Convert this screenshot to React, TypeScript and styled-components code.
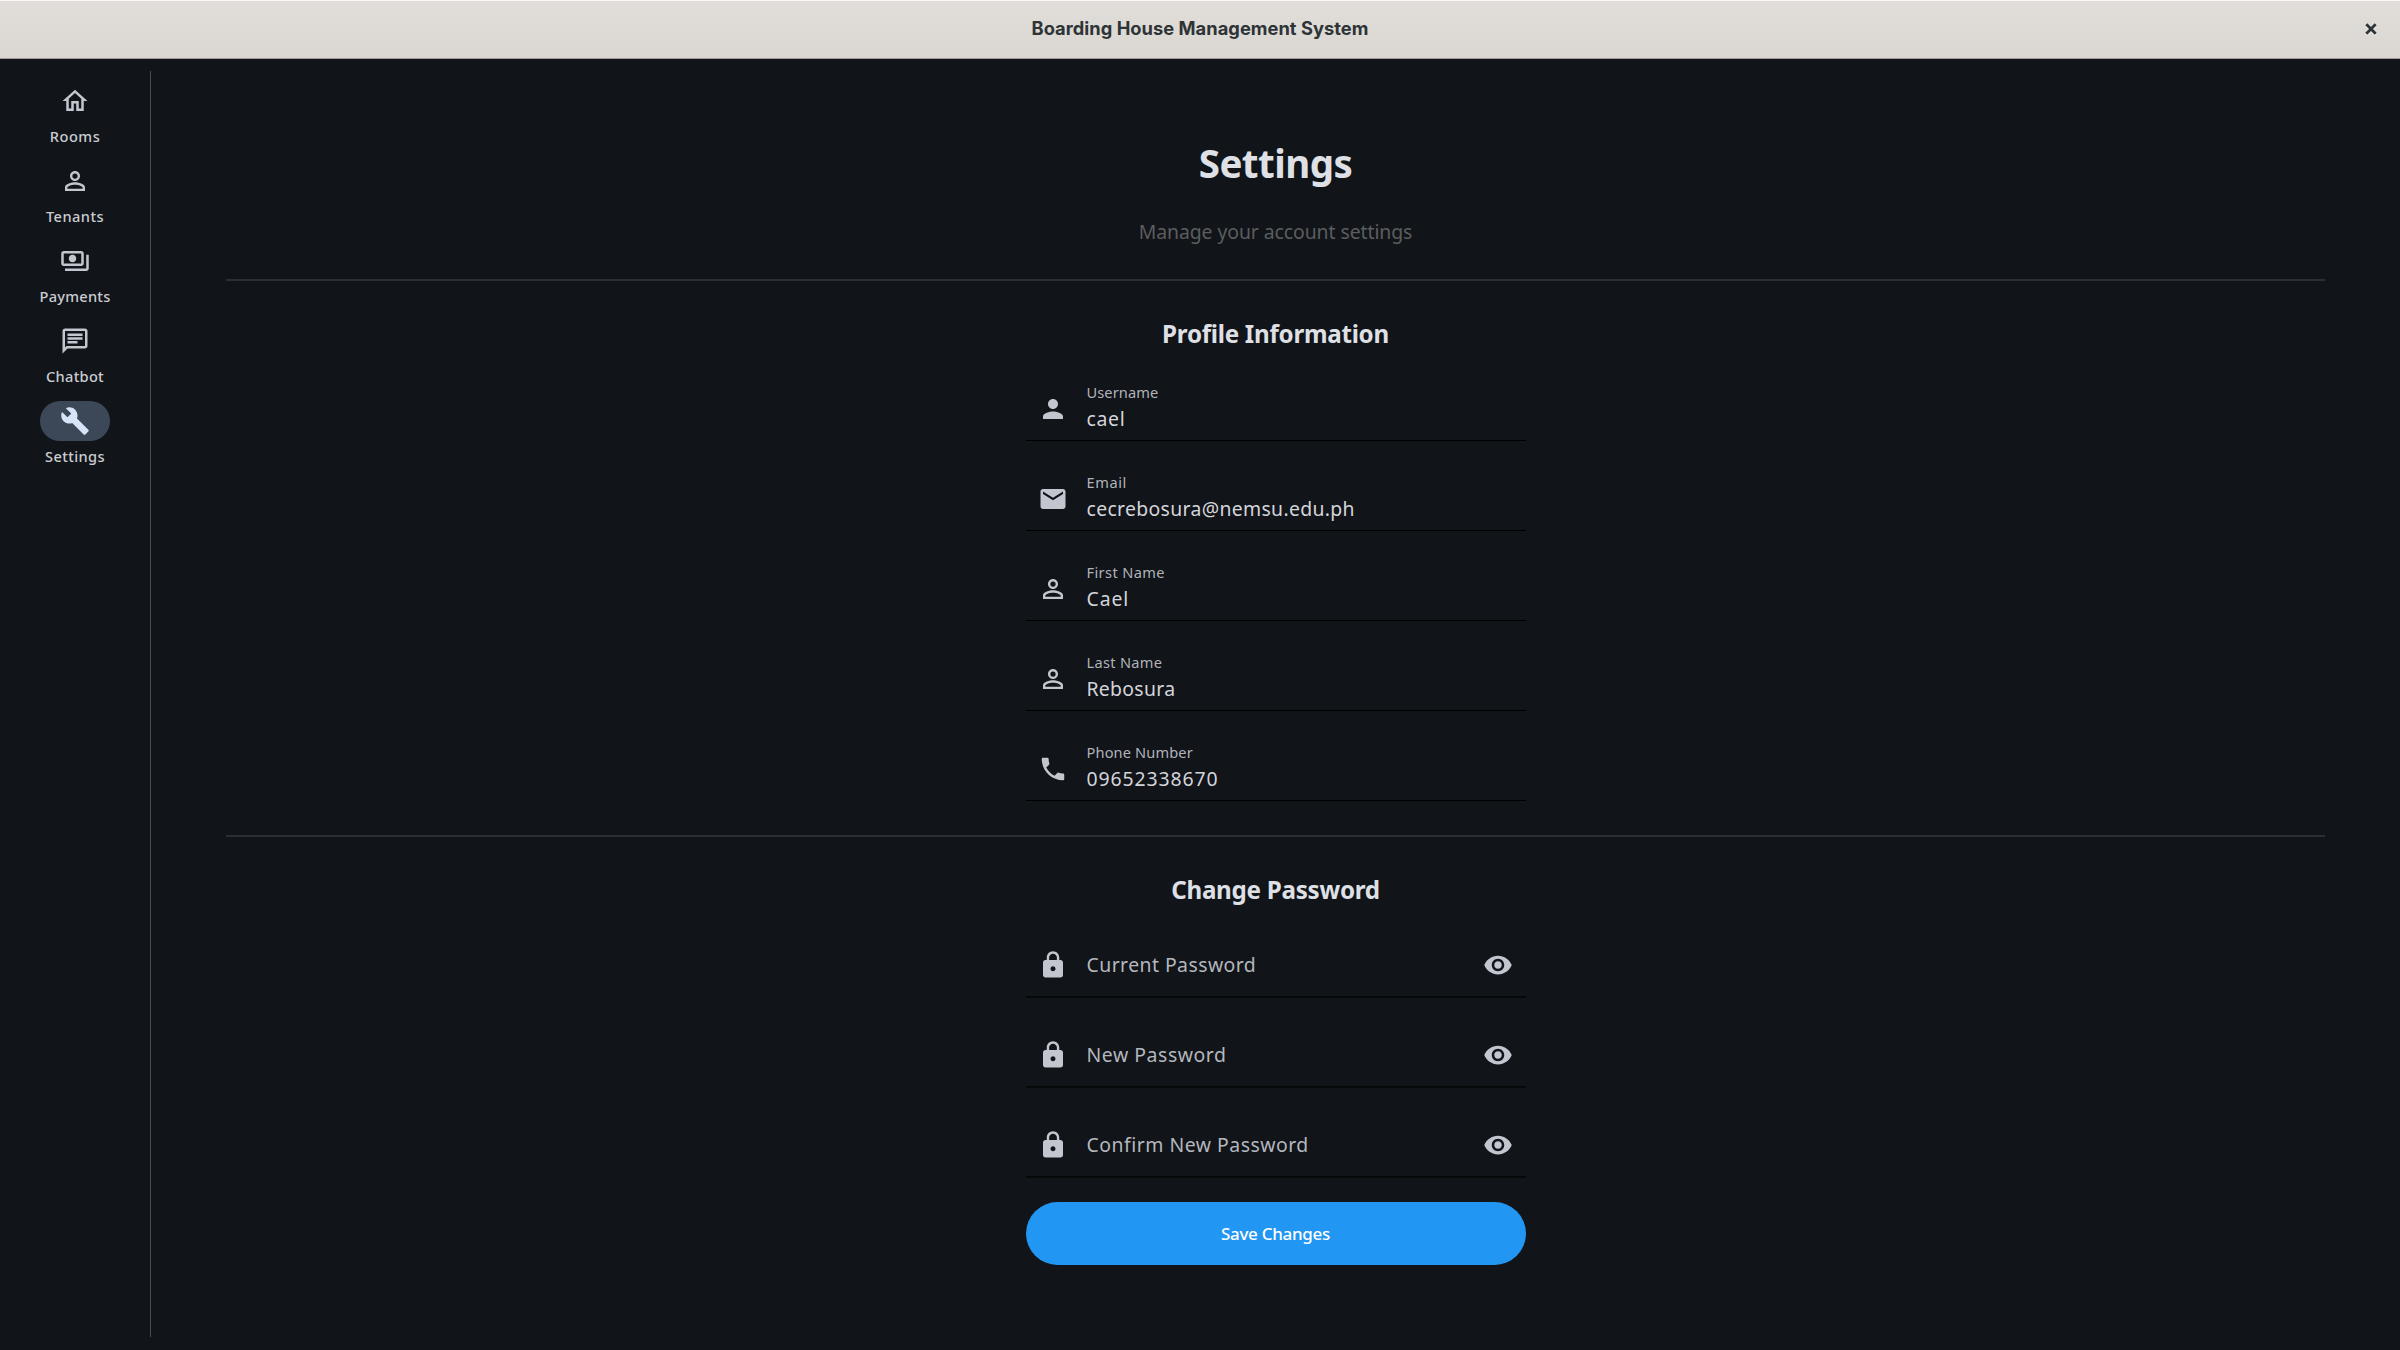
import React from "react";
import styled, { createGlobalStyle } from "styled-components";
import {
  MdBuild,
  MdEmail,
  MdLock,
  MdOutlineChat,
  MdOutlineHome,
  MdOutlinePayments,
  MdPerson,
  MdPersonOutline,
  MdPhone,
  MdVisibility,
} from "react-icons/md";
import type { IconType } from "react-icons";

const GlobalStyle = createGlobalStyle`
  * { box-sizing: border-box; }
  body {
    margin: 0;
    background: #111418;
    color: #dfe0e6;
    font-family: "Noto Sans", "Open Sans", sans-serif;
  }
`;

const Window = styled.div`
  display: flex;
  flex-direction: column;
  width: 2400px;
  height: 1350px;
  overflow: hidden;
  background: #111418;
`;

const TitleBar = styled.header`
  display: grid;
  grid-template-columns: 60px 1fr 60px;
  align-items: center;
  height: 59px;
  padding-bottom: 3px;
  border-top: 1px solid #f8f8f7;
  border-bottom: 1px solid #9f9a94;
  background: linear-gradient(#e1deda, #dad6d2);
  flex: none;
`;

const WindowTitle = styled.h1`
  grid-column: 2;
  margin: 0;
  text-align: center;
  font: 700 18.3px/23px Inter, sans-serif;
  letter-spacing: 0.03px;
  color: #2e3436;
`;

const CloseButton = styled.button`
  display: flex;
  justify-content: center;
  padding: 1px 0 0 2px;
  border: 0;
  background: none;
  color: #2e3436;
  filter: drop-shadow(0 1px 0 rgba(255, 255, 255, 0.75));
`;

const Body = styled.div`
  display: flex;
  flex: 1;
  min-height: 0;
`;

const Sidebar = styled.nav`
  display: flex;
  flex-direction: column;
  align-items: center;
  gap: 15px;
  width: 150px;
  padding-top: 22px;
`;

const NavItem = styled.a`
  display: flex;
  flex-direction: column;
  align-items: center;
  gap: 5px;
`;

const Indicator = styled.span<{ $active?: boolean }>`
  display: flex;
  align-items: center;
  justify-content: center;
  width: 70px;
  height: 40px;
  border-radius: 20px;
  background: ${(p) => (p.$active ? "#3c4858" : "transparent")};
  color: ${(p) => (p.$active ? "#d7e3f8" : "#c3c6cf")};
`;

const NavLabel = styled.span<{ $tracking: number }>`
  font-size: 14.6px;
  font-weight: 500;
  line-height: 20px;
  letter-spacing: ${(p) => p.$tracking}px;
  color: #cbccd2;
`;

const VerticalDivider = styled.div`
  width: 1px;
  margin: 12px 0 13px;
  background: #4a4d51;
`;

const Main = styled.main`
  display: flex;
  flex: 1;
  flex-direction: column;
  align-items: center;
  padding: 80px 75px 0;
`;

const PageTitle = styled.h2`
  margin: 0 0 30px;
  font-size: 38.5px;
  font-weight: 700;
  line-height: 48px;
  letter-spacing: -0.54px;
`;

const Subtitle = styled.p`
  margin: 0 0 32px;
  font-size: 19.4px;
  line-height: 30px;
  letter-spacing: -0.065px;
  color: #5c5d5f;
`;

const Rule = styled.hr`
  width: 100%;
  height: 2px;
  margin: 0;
  border: 0;
  background: #2b2f33;
`;

const Section = styled.section`
  display: flex;
  flex-direction: column;
  align-items: center;
  gap: 25px;
  width: 500px;
  padding: 34px 0;
`;

const SectionTitle = styled.h3`
  margin: 0;
  padding-top: 1px;
  font-size: 24.2px;
  font-weight: 700;
  line-height: 35px;
  letter-spacing: -0.275px;
`;

const FieldBox = styled.div<{ $filled: boolean }>`
  display: flex;
  align-items: center;
  gap: 18.5px;
  width: 100%;
  height: 65px;
  padding: 0 12.5px;
  color: #c3c6cf;
  box-shadow: ${(p) =>
    p.$filled ? "inset 0 -1px 0 #000" : "inset 0 -1px 0 #050608, 0 1px 0 #08090b"};
`;

const FieldText = styled.div`
  display: flex;
  flex: 1;
  flex-direction: column;
  gap: 5px;
  margin-bottom: 4px;
`;

const FieldLabel = styled.span<{ $tracking: number }>`
  font-size: 14.6px;
  line-height: 20px;
  letter-spacing: ${(p) => p.$tracking}px;
  color: #b0b3ba;
`;

const FieldValue = styled.span<{ $tracking: number }>`
  font-size: 19.4px;
  font-weight: 450;
  line-height: 24px;
  letter-spacing: ${(p) => p.$tracking}px;
  color: #d4d5db;
`;

const Placeholder = styled.span<{ $tracking: number }>`
  flex: 1;
  font-size: 19.4px;
  line-height: 24px;
  letter-spacing: ${(p) => p.$tracking}px;
  color: #b4b7be;
`;

const SaveButton = styled.button`
  width: 100%;
  height: 63px;
  padding: 0;
  border: 0;
  border-radius: 32px;
  background: #2196f3;
  color: #fff;
  font: 500 17px/24px "Noto Sans", sans-serif;
  letter-spacing: -0.29px;
`;

interface NavEntry {
  label: string;
  icon: IconType;
  tracking: number;
  active?: boolean;
}

const navEntries: NavEntry[] = [
  { label: "Rooms", icon: MdOutlineHome, tracking: 0.5 },
  { label: "Tenants", icon: MdPersonOutline, tracking: 0.45 },
  { label: "Payments", icon: MdOutlinePayments, tracking: 0.25 },
  { label: "Chatbot", icon: MdOutlineChat, tracking: 0.3 },
  { label: "Settings", icon: MdBuild, tracking: 0.4, active: true },
];

interface ProfileEntry {
  label: string;
  value: string;
  icon: IconType;
  labelTracking: number;
  valueTracking: number;
}

const profileEntries: ProfileEntry[] = [
  { label: "Username", value: "cael", icon: MdPerson, labelTracking: 0.1, valueTracking: 0.7 },
  { label: "Email", value: "cecrebosura@nemsu.edu.ph", icon: MdEmail, labelTracking: 0.6, valueTracking: 0.33 },
  { label: "First Name", value: "Cael", icon: MdPersonOutline, labelTracking: 0.39, valueTracking: 0.9 },
  { label: "Last Name", value: "Rebosura", icon: MdPersonOutline, labelTracking: 0.3, valueTracking: 0.3 },
  { label: "Phone Number", value: "09652338670", icon: MdPhone, labelTracking: 0.14, valueTracking: 0.9 },
];

const passwordEntries = [
  { label: "Current Password", tracking: 0.45 },
  { label: "New Password", tracking: 0.56 },
  { label: "Confirm New Password", tracking: 0.51 },
];

export default function App() {
  return (
    <>
      <GlobalStyle />
      <Window>
        <TitleBar>
          <WindowTitle>Boarding House Management System</WindowTitle>
          <CloseButton aria-label="Close">
            <svg width="12" height="12" viewBox="0 0 12 12" fill="none" stroke="currentColor" strokeWidth="2.8">
              <path d="M1.3 1.3l9.4 9.4M10.7 1.3l-9.4 9.4" />
            </svg>
          </CloseButton>
        </TitleBar>
        <Body>
          <Sidebar>
            {navEntries.map(({ label, icon: Icon, tracking, active }) => (
              <NavItem key={label}>
                <Indicator $active={active}>
                  <Icon size={30} />
                </Indicator>
                <NavLabel $tracking={tracking}>{label}</NavLabel>
              </NavItem>
            ))}
          </Sidebar>
          <VerticalDivider />
          <Main>
            <PageTitle>Settings</PageTitle>
            <Subtitle>Manage your account settings</Subtitle>
            <Rule />
            <Section>
              <SectionTitle>Profile Information</SectionTitle>
              {profileEntries.map(({ label, value, icon: Icon, labelTracking, valueTracking }) => (
                <FieldBox key={label} $filled>
                  <Icon size={30} />
                  <FieldText>
                    <FieldLabel $tracking={labelTracking}>{label}</FieldLabel>
                    <FieldValue $tracking={valueTracking}>{value}</FieldValue>
                  </FieldText>
                </FieldBox>
              ))}
            </Section>
            <Rule />
            <Section>
              <SectionTitle>Change Password</SectionTitle>
              {passwordEntries.map(({ label, tracking }) => (
                <FieldBox key={label} $filled={false}>
                  <MdLock size={30} />
                  <Placeholder $tracking={tracking}>{label}</Placeholder>
                  <MdVisibility size={30} />
                </FieldBox>
              ))}
              <SaveButton>Save Changes</SaveButton>
            </Section>
          </Main>
        </Body>
      </Window>
    </>
  );
}
